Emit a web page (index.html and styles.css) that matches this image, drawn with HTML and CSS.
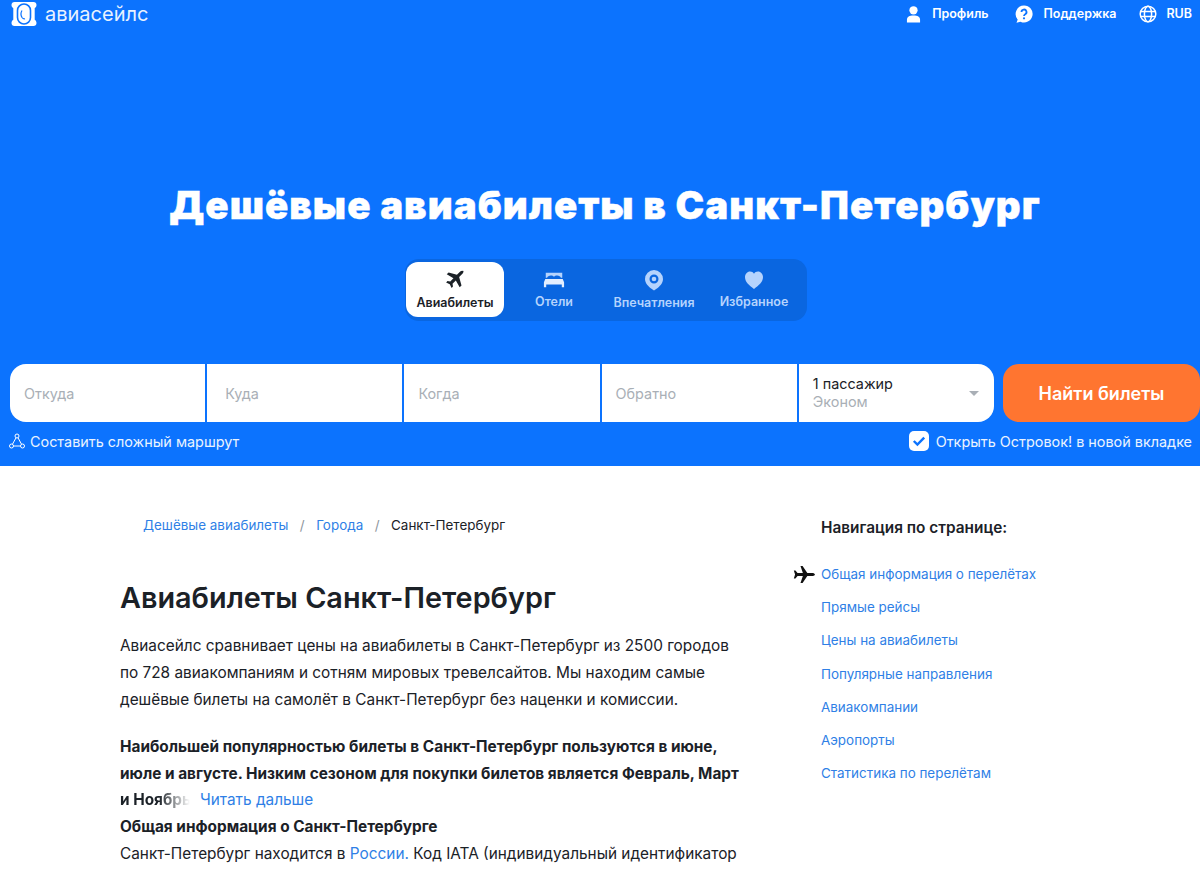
FILE: index.html
```html
<!doctype html>
<html lang="ru">
  <head>
    <meta charset="UTF-8" />
    <meta name="viewport" content="width=device-width, initial-scale=1.0" />
    <title>Дешёвые авиабилеты в Санкт-Петербург</title>
    <link rel="stylesheet" href="styles.css">
  </head>
  <body>
    <section class="hero">
      <header class="topbar">
        <a class="logo" href="#">
          <svg class="logo-icon" viewBox="0 0 26 26" width="26" height="26">
            <path fill="#fff" d="M3.500 1h19c1.800 0 3 1.200 3 3 0 1.500-.8 2.500-1.800 3.200v11.600c1 .7 1.800 1.700 1.800 3.200 0 1.800-1.200 3-3 3h-19c-1.800 0-3-1.200-3-3 0-1.500.8-2.500 1.800-3.200V7.200C1.300 6.500.500 5.500.500 4c0-1.800 1.200-3 3-3z"/>
            <rect x="6.500" y="3" width="13" height="20" rx="6.500" fill="none" stroke="#0c73fe" stroke-width="1.600"/>
            <path fill="none" stroke="#0c73fe" stroke-width="1.200" d="M11 9.500c-1.200 2-1.200 5 0 7 .8 1 2 1.500 3 1.200"/>
          </svg>
          <span>авиасейлс</span>
        </a>
        <nav class="topnav">
          <a class="topnav-profile" href="#">
            <svg viewBox="0 0 16 18" width="15" height="18"><circle cx="8" cy="5" r="4.400" fill="#fff"/><path fill="#fff" d="M1 18v-3c0-3 2.500-4.500 7-4.500s7 1.500 7 4.500v3z"/></svg>
            Профиль
          </a>
          <a href="#">
            <svg viewBox="0 0 18 18" width="18" height="18"><path fill="#fff" d="M9 .5a8.500 8.500 0 1 1-3.500 16.200L1.500 17.800l1.200-3.300A8.500 8.500 0 0 1 9 .5z"/><path fill="none" stroke="#0c73fe" stroke-width="1.800" d="M6.500 7a2.500 2.500 0 1 1 3.700 2.200c-.8.500-1.200 1-1.200 1.800"/><circle cx="9" cy="13.300" r="1.100" fill="#0c73fe"/></svg>
            Поддержка
          </a>
          <a class="topnav-cur" href="#">
            <svg viewBox="0 0 18 18" width="18" height="18" fill="none" stroke="#fff" stroke-width="1.500"><circle cx="9" cy="9" r="7.800"/><ellipse cx="9" cy="9" rx="3.600" ry="7.800"/><path d="M1.500 6.500h15M1.500 11.500h15"/></svg>
            RUB
          </a>
        </nav>
      </header>

      <h1 class="hero-title">Дешёвые авиабилеты в Санкт-Петербург</h1>

      <div class="tabs">
        <a class="tab tab-active" href="#">
          <svg viewBox="0 0 24 24" width="22" height="22"><path fill="currentColor" d="M21.500 2.500c-1-1-2.700-.8-3.800.3l-3.600 3.600L5 3.800 3 5.800l7.300 4.200-3.500 3.600-3-.5-1.500 1.500 4 2 2 4 1.500-1.500-.5-3 3.600-3.500 4.200 7.300 2-2-2.600-9.100 3.600-3.600c1.100-1.100 1.300-2.700.9-3.700z"/></svg>
          Авиабилеты
        </a>
        <a class="tab" href="#">
          <svg viewBox="0 0 24 20" width="22" height="20"><path fill="currentColor" d="M3 2h18v5.500h-1.500C19 6 17.500 5 15.500 5c-1.500 0-2.700.5-3.500 1.500C11.200 5.500 10 5 8.500 5 6.500 5 5 6 4.500 7.500H3z"/><path fill="#e3eeff" d="M2.500 9h19l1.500 3.500V18h-2.500v-3h-17v3H1v-5.500z"/></svg>
          Отели
        </a>
        <a class="tab" href="#">
          <svg viewBox="0 0 20 22" width="20" height="22"><path fill="currentColor" fill-rule="evenodd" d="M10 1a9 9 0 0 1 9 9c0 4.500-3.500 7.500-6.500 9.800L10 21.500l-2.500-1.700C4.500 17.500 1 14.500 1 10a9 9 0 0 1 9-9zm0 4.500a4.500 4.500 0 1 0 0 9 4.500 4.500 0 0 0 0-9z"/><circle cx="10" cy="10" r="2.300" fill="currentColor"/></svg>
          Впечатления
        </a>
        <a class="tab" href="#">
          <svg viewBox="0 0 20 20" width="20" height="20"><path fill="currentColor" d="M10 19C5 15 1 12 1 7c0-3 2.300-5.500 5-5.500 1.800 0 3.100.8 4 2.300.9-1.500 2.200-2.300 4-2.300 2.700 0 5 2.500 5 5.500 0 5-4 8-9 12z"/></svg>
          Избранное
        </a>
      </div>

      <form class="search">
        <div class="fields">
          <div class="field">Откуда</div>
          <div class="field field-to">Куда</div>
          <div class="field">Когда</div>
          <div class="field">Обратно</div>
          <div class="field field-pass">
            <div>
              <div class="pass-count">1 пассажир</div>
              <div class="pass-class">Эконом</div>
            </div>
            <span class="caret"></span>
          </div>
        </div>
        <button class="search-btn" type="button">Найти билеты</button>
      </form>

      <div class="search-opts">
        <a class="route-link" href="#">
          <svg viewBox="0 0 16 16" width="16" height="16" fill="none" stroke="#fff" stroke-width="1"><circle cx="8" cy="3" r="2"/><circle cx="2.500" cy="13" r="2"/><circle cx="13.500" cy="13" r="2"/><path d="M7 4.800 3.500 11.200M9 4.800l3.500 6.400M4.500 13h7"/></svg>
          Составить сложный маршрут
        </a>
        <label class="check">
          <svg viewBox="0 0 20 20" width="20" height="20"><rect width="20" height="20" rx="5" fill="#fff"/><path fill="none" stroke="#0c73fe" stroke-width="2.400" d="m4.800 10 3.600 3.600 6.800-7"/></svg>
          Открыть Островок! в новой вкладке
        </label>
      </div>
    </section>

    <main class="page">
      <article class="content">
        <nav class="crumbs">
          <a href="#">Дешёвые авиабилеты</a>
          <span class="crumb-sep">/</span>
          <a href="#">Города</a>
          <span class="crumb-sep">/</span>
          <span>Санкт-Петербург</span>
        </nav>
        <h2 class="content-title">Авиабилеты Санкт-Петербург</h2>
        <p class="lead">Авиасейлс сравнивает цены на авиабилеты в Санкт-Петербург из 2500 городов по 728 авиакомпаниям и сотням мировых тревелсайтов. Мы находим самые дешёвые билеты на самолёт в Санкт-Петербург без наценки и комиссии.</p>
        <p class="season">Наибольшей популярностью билеты в Санкт-Петербург пользуются в июне, июле и августе. Низким сезоном для покупки билетов является Февраль, Март</p>
        <div class="more-row"><b class="faded">и Ноябрь</b><a href="#">Читать дальше</a></div>
        <div class="subhead">Общая информация о Санкт-Петербурге</div>
        <div class="text-row">Санкт-Петербург находится в <a href="#">России.</a> Код IATA (индивидуальный идентификатор</div>
      </article>

      <aside class="sidenav">
        <div class="sidenav-title">Навигация по странице:</div>
        <ul class="sidenav-list">
          <li class="current">
            <svg class="plane-mark" viewBox="0 0 24 20" width="24" height="19"><path fill="#111" d="M23.500 10c0-1-1.500-1.600-3-1.600h-5L10.500 1H8.300l2.500 7.400H5.200L3 5.800H1.300L2.600 10 1.300 14.200H3l2.200-2.600h5.600L8.300 19h2.200l5-7.400h5c1.500 0 3-.6 3-1.600z"/></svg>
            <a href="#">Общая информация о перелётах</a>
          </li>
          <li><a href="#">Прямые рейсы</a></li>
          <li><a href="#">Цены на авиабилеты</a></li>
          <li><a href="#">Популярные направления</a></li>
          <li><a href="#">Авиакомпании</a></li>
          <li><a href="#">Аэропорты</a></li>
          <li><a href="#">Статистика по перелётам</a></li>
        </ul>
      </aside>
    </main>
  </body>
</html>
```

FILE: styles.css
```css
:root {
  --color-blue: #0c73fe;
  --color-link: #2f7fe6;
  --color-text: #1b2127;
  --color-muted: #a9afb6;
  --font-sans: Inter, "Noto Sans", sans-serif;
}

html,
body {
  height: 870px;
  overflow: hidden;
}

body {
  margin: 0;
  font-family: var(--font-sans);
  color: var(--color-text);
  background: #fff;
}

a {
  text-decoration: none;
  color: inherit;
}

.hero {
  background: var(--color-blue);
  height: 466px;
  display: flex;
  flex-direction: column;
  color: #fff;
}

.topbar {
  display: flex;
  justify-content: space-between;
  align-items: center;
  height: 27px;
  padding: 0 8px 0 11px;
}

.logo {
  display: flex;
  align-items: center;
  gap: 8px;
  font-size: 20px;
  color: #e8f2ff;
}

.topnav {
  display: flex;
  gap: 23px;
  font-size: 12.48px;
  font-weight: 600;
}

.topnav a {
  display: flex;
  align-items: center;
  gap: 11px;
}

.topnav .topnav-profile {
  margin-right: 3px;
}

.topnav .topnav-cur {
  gap: 9px;
}

.hero-title {
  margin: 154px 0 0;
  padding-left: 10px;
  text-align: center;
  font-size: 38.4px;
  line-height: 48px;
  font-weight: 900;
  letter-spacing: 1.05px;
  -webkit-text-stroke: 0.4px #fff;
}

.tabs {
  align-self: center;
  display: flex;
  margin: 30px 0 0 12px;
  padding: 3px 3px 4px 1px;
  border-radius: 14px;
  background: #0a66e0;
}

.tab {
  width: 100px;
  height: 55px;
  display: flex;
  flex-direction: column;
  align-items: center;
  justify-content: center;
  gap: 4px;
  font-size: 12.48px;
  font-weight: 600;
  color: #b5d3fd;
  border-radius: 12px;
}

.tab-active {
  width: 98px;
  background: #fff;
  color: var(--color-text);
}

.search {
  display: flex;
  gap: 9px;
  margin-top: 43px;
  padding: 0 0 0 10px;
}

.fields {
  display: grid;
  grid-template-columns: repeat(5, 1fr);
  gap: 2px;
  flex: 1;
  height: 58px;
}

.field {
  display: flex;
  align-items: center;
  padding-left: 14px;
  background: #fff;
  color: var(--color-muted);
  font-size: 14.4px;
}

.field:first-child {
  border-radius: 16px 0 0 16px;
}

.field-to {
  padding-left: 18px;
}

.field-pass {
  justify-content: space-between;
  padding-right: 15px;
  border-radius: 0 16px 16px 0;
}

.pass-count {
  color: var(--color-text);
  line-height: 18px;
}

.pass-class {
  color: var(--color-muted);
  line-height: 18px;
}

.caret {
  width: 0;
  height: 0;
  border: 5px solid transparent;
  border-top: 5px solid #a9afb6;
  border-bottom: 0;
}

.search-btn {
  width: 197px;
  border: 0;
  border-radius: 16px;
  background: #ff7530;
  color: #fff;
  font-family: var(--font-sans);
  font-size: 18px;
  font-weight: 600;
}

.search-opts {
  display: flex;
  justify-content: space-between;
  align-items: center;
  margin-top: 9px;
  padding: 0 8px 0 9px;
  font-size: 14.4px;
  color: #eaf3ff;
}

.route-link,
.check {
  display: flex;
  align-items: center;
  gap: 5px;
}

.check {
  gap: 7px;
}

.page {
  display: flex;
  padding-left: 120px;
}

.content {
  width: 625px;
  font-size: 15.36px;
  line-height: 26.88px;
}

.crumbs {
  display: flex;
  gap: 11.5px;
  margin-top: 46px;
  padding-left: 23px;
  font-size: 13.44px;
  line-height: 26px;
}

.crumbs a,
.content a,
.sidenav a {
  color: var(--color-link);
}

.crumb-sep {
  color: #8d959d;
}

.content-title {
  margin: 40px 0 0;
  font-size: 28.8px;
  line-height: 40px;
  font-weight: 600;
}

.lead {
  margin: 15px 0 0;
}

.season {
  margin: 20px 0 0;
  font-weight: 700;
}

.more-row {
  display: flex;
  gap: 10px;
}

.faded {
  background: linear-gradient(90deg, #1b2127 55%, #fff 100%);
  -webkit-background-clip: text;
  background-clip: text;
  color: transparent;
  width: 70px;
  overflow: hidden;
  white-space: nowrap;
}

.subhead {
  font-weight: 700;
}

.sidenav {
  margin-left: 76px;
  padding-top: 49px;
  font-size: 13.44px;
}

.sidenav-title {
  font-size: 15.36px;
  font-weight: 600;
  line-height: 26px;
}

.sidenav-list {
  list-style: none;
  margin: 17px 0 0;
  padding: 0;
}

.sidenav-list li {
  position: relative;
  line-height: 33.2px;
}

.plane-mark {
  position: absolute;
  left: -29px;
  top: 7px;
}
```
